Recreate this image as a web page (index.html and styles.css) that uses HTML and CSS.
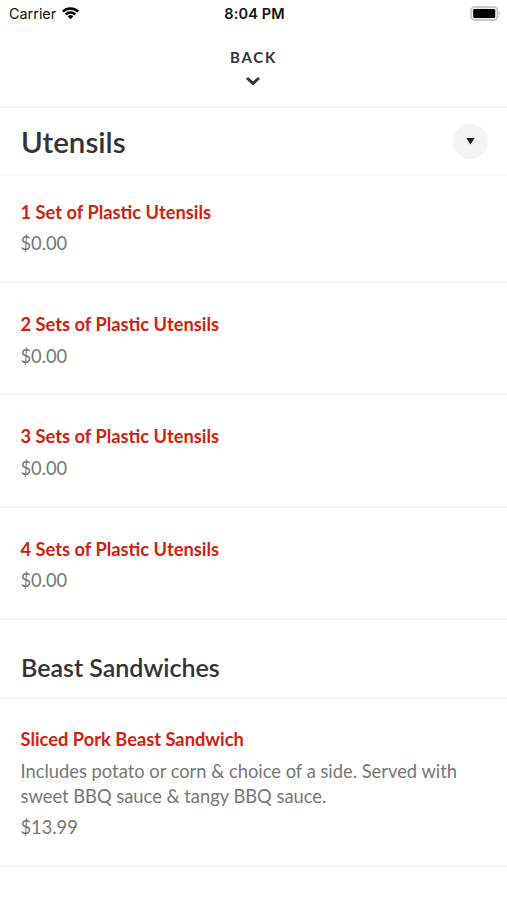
FILE: index.html
```html
<!DOCTYPE html>
<html lang="en">
<head>
<meta charset="utf-8">
<title>Menu</title>
<link rel="stylesheet" href="styles.css">
</head>
<body>
<div class="status">
  <div class="carrier"><span>Carrier</span>
    <svg class="wifi" width="19" height="14" viewBox="0 0 18 14"><path d="M0.500 4.600a12.300 12.300 0 0 1 17 0l-1.800 1.900a9.700 9.700 0 0 0-13.400 0zM3.300 7.500a8.200 8.200 0 0 1 11.400 0L13 9.300a5.800 5.800 0 0 0-8 0zM6.100 10.300a4.200 4.200 0 0 1 5.800 0L9 13.300z"/></svg>
  </div>
  <div class="time">8:04 PM</div>
  <svg class="battery" width="31" height="15" viewBox="0 0 31 15"><rect x="1" y="1" width="26.500" height="13" rx="3.600" fill="#eee" stroke="#bbb" stroke-width="1.300"/><rect x="3.200" y="3" width="22" height="9" rx="1.200"/><path d="M28.700 5.300q2.600 2.200 0 4.400z" fill="#bbb"/></svg>
</div>
<header class="back">
  <span class="back-label">BACK</span>
  <svg class="chevron" width="16" height="10" viewBox="0 0 16 10"><path d="M2 2l6 5.500L14 2" fill="none" stroke="#333" stroke-width="3"/></svg>
</header>
<section class="title-row">
  <h1>Utensils</h1>
  <button class="toggle" aria-label="Sections"><svg width="9" height="7" viewBox="0 0 9 7"><path d="M.3 0h8.400L4.500 6.500z" fill="#222"/></svg></button>
</section>
<main>
  <article class="item"><h3>1 Set of Plastic Utensils</h3><p class="price">$0.00</p></article>
  <article class="item"><h3>2 Sets of Plastic Utensils</h3><p class="price">$0.00</p></article>
  <article class="item"><h3>3 Sets of Plastic Utensils</h3><p class="price">$0.00</p></article>
  <article class="item"><h3>4 Sets of Plastic Utensils</h3><p class="price">$0.00</p></article>
  <h2>Beast Sandwiches</h2>
  <article class="item sandwich"><h3>Sliced Pork Beast Sandwich</h3><p class="desc">Includes potato or corn &amp; choice of a side. Served with<br>sweet BBQ sauce &amp; tangy BBQ sauce.</p><p class="price">$13.99</p></article>
</main>
</body>
</html>
```
FILE: styles.css
```css
* { box-sizing: border-box; }
body { margin: 0; height: 900px; overflow: hidden; background: #fff; color: #333; font-family: Lato, sans-serif; }
h1, h2, h3, p { margin: 0; }
.status { display: grid; grid-template-columns: 1fr auto 1fr; align-items: center; height: 27px; padding: 0 6px 0 9px; font: 15px/27px Inter, sans-serif; color: #111; }
.carrier { display: flex; align-items: center; gap: 6px; font-size: 14.400px; }
.wifi { margin: -2px 0 0 -1px; }
.time { font-weight: 600; font-size: 14.500px; letter-spacing: .15px; margin-right: 1px; }
.battery { justify-self: end; margin-top: -1px; }
.back { height: 81px; padding-top: 20px; display: flex; flex-direction: column; align-items: center; border-bottom: 2px solid #f6f6f6; }
.back-label { font-size: 15px; line-height: 20px; font-weight: 700; letter-spacing: 1.800px; margin-bottom: 9px; }
.chevron { margin-right: 1px; }
.title-row { height: 68px; padding: 0 19px 0 21px; display: flex; align-items: center; justify-content: space-between; border-bottom: 2px solid #f9f9f9; }
h1 { font-size: 29.500px; line-height: 36px; font-weight: 600; padding-top: 2px; }
.toggle { width: 35px; height: 35px; padding: 0; border: 0; border-radius: 50%; background: #f4f4f4; display: flex; align-items: center; justify-content: center; }
.item { height: 112.300px; padding: 29px 21px 0 20.500px; border-bottom: 2px solid #f6f6f6; }
.item:first-child { height: 107px; padding-top: 23.500px; }
h3 { color: #d3210f; font-size: 18.300px; line-height: 24px; font-weight: 700; }
.price { color: #777; font-size: 18.300px; line-height: 24px; margin-top: 7.500px; }
.desc { color: #777; font-size: 18.340px; line-height: 24.500px; margin-top: 8px; white-space: nowrap; }
h2 { height: 79px; padding: 30px 21px 0; font-size: 25px; line-height: 34px; font-weight: 600; border-bottom: 2px solid #f6f6f6; }
.sandwich { height: 168px; padding-top: 28.500px; }
.sandwich .price { margin-top: 7px; }
```
